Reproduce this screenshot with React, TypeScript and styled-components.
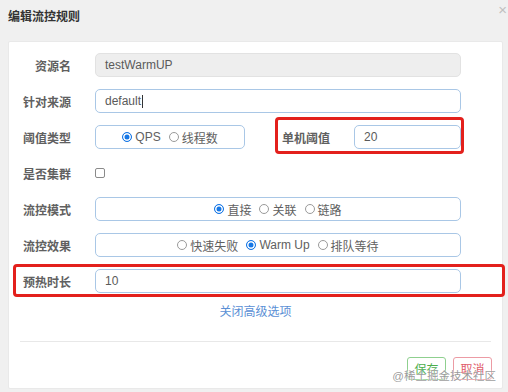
import React from 'react';
import styled, { createGlobalStyle } from 'styled-components';

const GlobalStyle = createGlobalStyle`
  html, body {
    margin: 0;
    padding: 0;
    background: #f0f0f0;
    font-family: "Liberation Sans", "Noto Sans CJK SC", sans-serif;
  }
  * { box-sizing: border-box; }
`;

const Page = styled.div`
  position: relative;
  width: 508px;
  height: 392px;
  background: #f0f0f0;
  overflow: hidden;
`;

const Header = styled.div`
  display: flex;
  justify-content: space-between;
  align-items: flex-start;
  height: 41px;
  padding: 9px 1px 0 8px;
`;

const Title = styled.div`
  font-size: 12px;
  line-height: 16px;
  font-weight: 700;
  color: #333;
`;

const Close = styled.span`
  margin-top: -7px;
  font-size: 15px;
  line-height: 16px;
  color: #c0c0c0;
`;

const Panel = styled.div`
  margin: 0 5px 0 8px;
  height: 348px;
  background: #fff;
  border: 1px solid #e9e9e9;
  border-radius: 2px;
  padding-top: 11px;
`;

const Form = styled.div`
  display: flex;
  flex-direction: column;
  gap: 12px;
`;

const Row = styled.div`
  position: relative;
  display: flex;
  align-items: center;
  height: 24px;
`;

const Label = styled.label<{ $width?: number }>`
  width: ${p => p.$width ?? 62}px;
  flex: none;
  text-align: right;
  font-size: 12px;
  font-weight: 700;
  color: #606060;
  white-space: nowrap;
`;

const Control = styled.div<{ $width: number }>`
  margin-left: 24px;
  width: ${p => p.$width}px;
  height: 24px;
  display: flex;
`;

const Input = styled.div<{ $disabled?: boolean }>`
  width: 100%;
  height: 100%;
  display: flex;
  align-items: center;
  padding: 0 9px;
  font-size: 12px;
  color: #5a5a5a;
  border-radius: 5px;
  border: 1px solid ${p => (p.$disabled ? '#e2e2e2' : '#a9c7e6')};
  background: ${p => (p.$disabled ? '#eeeeee' : '#fff')};
`;

const Caret = styled.span`
  display: inline-block;
  width: 1px;
  height: 13px;
  margin-left: 1px;
  background: #333;
`;

const RadioBox = styled.div`
  width: 100%;
  height: 100%;
  display: flex;
  align-items: center;
  justify-content: center;
  gap: 8px;
  border-radius: 5px;
  border: 1px solid #a9c7e6;
`;

const Option = styled.span`
  display: flex;
  align-items: center;
  gap: 3px;
  font-size: 12px;
  color: #606060;
`;

const Dot = styled.span<{ $on?: boolean }>`
  width: 10px;
  height: 10px;
  border-radius: 50%;
  border: 1px solid ${p => (p.$on ? '#1677e6' : '#9a9a9a')};
  background: ${p => (p.$on ? '#1677e6' : '#fff')};
  box-shadow: ${p => (p.$on ? 'inset 0 0 0 1.5px #fff' : 'none')};
`;

const Checkbox = styled.span`
  margin-left: 24px;
  width: 10px;
  height: 10px;
  border: 1px solid #8a8a8a;
  border-radius: 2px;
  background: #fff;
`;

const Group = styled.div`
  position: relative;
  display: flex;
  align-items: center;
  margin-left: 37px;
`;

const Mark = styled.span<{ $l: number; $r: number; $t: number; $b: number }>`
  position: absolute;
  left: ${p => p.$l}px;
  right: ${p => p.$r}px;
  top: ${p => p.$t}px;
  bottom: ${p => p.$b}px;
  border: 3px solid #e3201c;
  border-radius: 4px;
  pointer-events: none;
`;

const Toggle = styled.div`
  margin-top: 10px;
  height: 18px;
  text-align: center;
  font-size: 12px;
  line-height: 18px;
  color: #5a8fd5;
`;

const Divider = styled.div`
  margin: 20px 11px 0 11px;
  height: 1px;
  background: #e8e8e8;
`;

const Footer = styled.div`
  display: flex;
  justify-content: flex-end;
  gap: 7px;
  padding: 15px 10px 0 0;
`;

const Button = styled.button<{ $tone: 'ok' | 'cancel' }>`
  width: 39px;
  height: 23px;
  padding: 0;
  font-family: inherit;
  font-size: 12px;
  background: #fff;
  border-radius: 3px;
  border: 1px solid ${p => (p.$tone === 'ok' ? '#8fd08f' : '#ec9ba4')};
  color: ${p => (p.$tone === 'ok' ? '#4cae4c' : '#e05a68')};
`;

const Watermark = styled.span`
  position: absolute;
  right: 12px;
  bottom: 9px;
  font-size: 11.5px;
  color: rgba(120, 120, 120, 0.75);
  text-shadow: 0 0 2px #fff, 0 0 1px #fff;
  pointer-events: none;
`;

const Radio: React.FC<{ label: string; on?: boolean }> = ({ label, on }) => (
  <Option>
    <Dot $on={on} />
    {label}
  </Option>
);

export default function App() {
  return (
    <Page>
      <GlobalStyle />
      <Header>
        <Title>编辑流控规则</Title>
        <Close>×</Close>
      </Header>
      <Panel>
        <Form>
          <Row>
            <Label>资源名</Label>
            <Control $width={366}>
              <Input $disabled>testWarmUP</Input>
            </Control>
          </Row>
          <Row>
            <Label>针对来源</Label>
            <Control $width={366}>
              <Input>
                default
                <Caret />
              </Input>
            </Control>
          </Row>
          <Row>
            <Label>阈值类型</Label>
            <Control $width={150}>
              <RadioBox>
                <Radio label="QPS" on />
                <Radio label="线程数" />
              </RadioBox>
            </Control>
            <Group>
              <Mark $l={-7} $r={-3} $t={-8} $b={-5} />
              <Label $width={48}>单机阈值</Label>
              <Control $width={107}>
                <Input>20</Input>
              </Control>
            </Group>
          </Row>
          <Row>
            <Label>是否集群</Label>
            <Checkbox />
          </Row>
          <Row>
            <Label>流控模式</Label>
            <Control $width={366}>
              <RadioBox>
                <Radio label="直接" on />
                <Radio label="关联" />
                <Radio label="链路" />
              </RadioBox>
            </Control>
          </Row>
          <Row>
            <Label>流控效果</Label>
            <Control $width={366}>
              <RadioBox>
                <Radio label="快速失败" />
                <Radio label="Warm Up" on />
                <Radio label="排队等待" />
              </RadioBox>
            </Control>
          </Row>
          <Row>
            <Mark $l={4} $r={-3} $t={-5} $b={-4} />
            <Label>预热时长</Label>
            <Control $width={366}>
              <Input>10</Input>
            </Control>
          </Row>
        </Form>
        <Toggle>关闭高级选项</Toggle>
        <Divider />
        <Footer>
          <Button $tone="ok">保存</Button>
          <Button $tone="cancel">取消</Button>
        </Footer>
      </Panel>
      <Watermark>@稀土掘金技术社区</Watermark>
    </Page>
  );
}
